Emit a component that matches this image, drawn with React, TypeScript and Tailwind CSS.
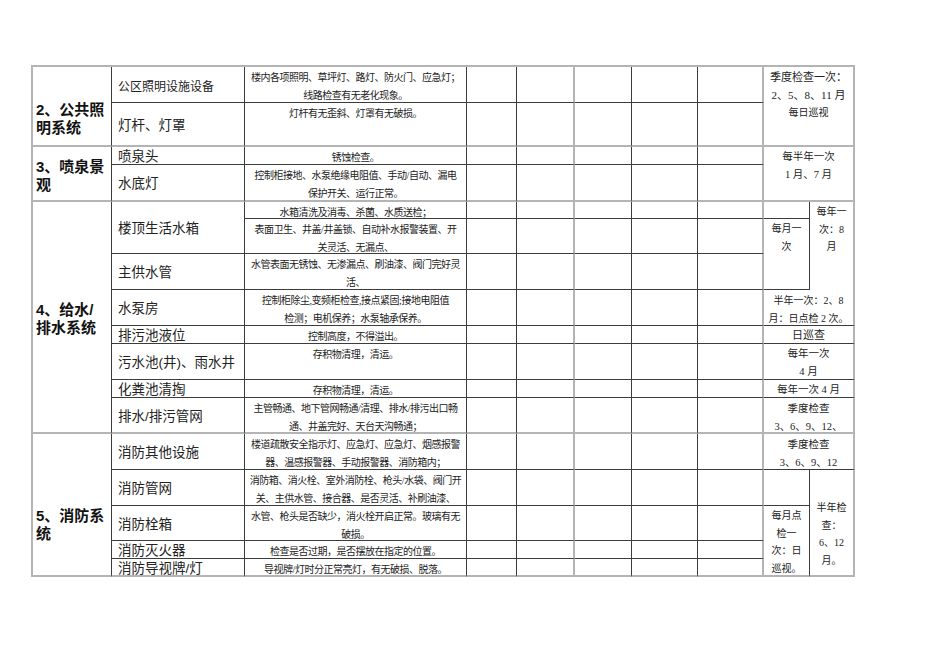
import React from 'react';

const serif = "font-['Liberation_Serif','Noto_Sans_CJK_SC',serif]";
const sans = "font-['Liberation_Sans','Noto_Sans_CJK_SC',sans-serif]";

type CellProps = {
  pos: string;
  r?: boolean;
  b?: boolean;
  className?: string;
  children?: React.ReactNode;
};

// grey = the thicker light rule, otherwise thin dark rule
function Cell({ pos, r, b, className = '', children }: CellProps) {
  const right = r ? 'border-r-2 border-r-[#b4b4b4]' : 'border-r border-r-[#3c3c3c]';
  const bottom = b ? 'border-b-2 border-b-[#b4b4b4]' : 'border-b border-b-[#3c3c3c]';
  return <div className={`${pos} ${right} ${bottom} ${className}`}>{children}</div>;
}

const rowStart = [
  'row-start-1',
  'row-start-2',
  'row-start-3',
  'row-start-4',
  'row-start-5',
  'row-start-6',
  'row-start-7',
  'row-start-8',
  'row-start-9',
  'row-start-10',
  'row-start-11',
  'row-start-12',
  'row-start-13',
  'row-start-14',
  'row-start-15',
  'row-start-16',
  'row-start-17',
];
const midCols = ['col-start-4', 'col-start-5', 'col-start-6', 'col-start-7', 'col-start-8'];
const groupEnd = [2, 4, 12, 17];

const items: { pos: string; text: string; small?: boolean; b?: boolean }[] = [
  { pos: 'row-start-1', text: '公区照明设施设备', small: true },
  { pos: 'row-start-2', text: '灯杆、灯罩', b: true },
  { pos: 'row-start-3', text: '喷泉头' },
  { pos: 'row-start-4', text: '水底灯', b: true },
  { pos: 'row-start-5 row-span-2', text: '楼顶生活水箱' },
  { pos: 'row-start-7', text: '主供水管' },
  { pos: 'row-start-8', text: '水泵房' },
  { pos: 'row-start-9', text: '排污池液位' },
  { pos: 'row-start-10', text: '污水池(井)、雨水井' },
  { pos: 'row-start-11', text: '化粪池清掏' },
  { pos: 'row-start-12', text: '排水/排污管网', b: true },
  { pos: 'row-start-13', text: '消防其他设施' },
  { pos: 'row-start-14', text: '消防管网' },
  { pos: 'row-start-15', text: '消防栓箱' },
  { pos: 'row-start-16', text: '消防灭火器' },
  { pos: 'row-start-17', text: '消防导视牌/灯', b: true },
];

const descs: string[][] = [
  ['楼内各项照明、草坪灯、路灯、防火门、应急灯；', '线路检查有无老化现象。'],
  ['灯杆有无歪斜、灯罩有无破损。'],
  ['锈蚀检查。'],
  ['控制柜接地、水泵绝缘电阻值、手动/自动、漏电', '保护开关、运行正常。'],
  ['水箱清洗及消毒、杀菌、水质送检；'],
  ['表面卫生、井盖/井盖锁、自动补水报警装置、开', '关灵活、无漏点、'],
  ['水管表面无锈蚀、无渗漏点、刷油漆、阀门完好灵', '活、'],
  ['控制柜除尘,变频柜检查,接点紧固;接地电阻值', '检测；电机保养；水泵轴承保养。'],
  ['控制高度，不得溢出。'],
  ['存积物清理，清运。'],
  ['存积物清理，清运。'],
  ['主管畅通、地下管网畅通/清理、排水/排污出口畅', '通、井盖完好、天台天沟畅通；'],
  ['楼道疏散安全指示灯、应急灯、应急灯、烟感报警', '器、温感报警器、手动报警器、消防箱内；'],
  ['消防箱、消火栓、室外消防栓、枪头/水袋、阀门开', '关、主供水管、接合器、是否灵活、补刷油漆、'],
  ['水管、枪头是否缺少，消火栓开启正常。玻璃有无', '破损。'],
  ['检查是否过期，是否摆放在指定的位置。'],
  ['导视牌/灯时分正常亮灯，有无破损、脱落。'],
];

const groupCls = `col-start-1 pl-[3px] text-[15px] font-bold leading-[18px] text-[#111] ${sans}`;
const itemCls = `col-start-2 flex items-center pl-[6px] pt-[4px] text-[#222] whitespace-nowrap ${sans}`;
const descCls = `col-start-3 pt-[2px] text-center text-[10px] leading-[18px] tracking-[-0.5px] whitespace-nowrap text-[#222] ${serif}`;
const freqCls = `text-center leading-[17.5px] whitespace-nowrap text-[#222] ${serif}`;

function Lines({ lines }: { lines: string[] }) {
  return (
    <>
      {lines.map((l, i) => (
        <div key={i}>{l}</div>
      ))}
    </>
  );
}

export default function App() {
  return (
    <div className="min-h-screen bg-white pt-[65px] pl-[31px]">
      <div className="grid w-fit grid-cols-[79px_133px_222px_50px_58px_57px_66px_66px_46px_45px] grid-rows-[36px_44px_18px_37px_17px_35px_36px_36px_18px_36px_18px_36px_36px_36px_35px_18px_18px] border-l-2 border-t-2 border-[#b4b4b4]">
        {/* column 1: system groups */}
        <Cell pos="row-start-1 row-span-2" b className={`${groupCls} pt-[34px]`}>
          <div>2、公共照</div>
          <div>明系统</div>
        </Cell>
        <Cell pos="row-start-3 row-span-2" b className={`${groupCls} pt-[11px]`}>
          <div>3、喷泉景</div>
          <div>观</div>
        </Cell>
        <Cell pos="row-start-5 row-span-8" b className={`${groupCls} pt-[99px]`}>
          <div>4、给水/</div>
          <div>排水系统</div>
        </Cell>
        <Cell pos="row-start-13 row-span-5" b className={`${groupCls} pt-[73px]`}>
          <div>5、消防系</div>
          <div>统</div>
        </Cell>

        {/* column 2: items */}
        {items.map((it) => (
          <Cell
            key={it.text}
            pos={it.pos}
            b={it.b}
            className={`${itemCls} ${it.small ? 'text-[12px]' : 'text-[13.5px]'}`}
          >
            {it.text}
          </Cell>
        ))}

        {/* column 3: check content */}
        {descs.map((d, i) => (
          <Cell key={i} pos={rowStart[i]} b={groupEnd.includes(i + 1)} className={descCls}>
            <Lines lines={d} />
          </Cell>
        ))}

        {/* empty record columns */}
        {rowStart.map((rs, i) =>
          midCols.map((cs, j) => (
            <Cell
              key={rs + cs}
              pos={`${rs} ${cs}`}
              r={j === 1 || j === 4}
              b={groupEnd.includes(i + 1)}
            />
          )),
        )}

        {/* frequency columns */}
        <Cell pos="row-start-1 row-span-2 col-start-9 col-span-2" r b className={`${freqCls} text-[11px] pt-[2px]`}>
          <div>季度检查一次：</div>
          <div>2、5、8、11 月</div>
          <div className="text-[10px]">每日巡视</div>
        </Cell>
        <Cell pos="row-start-3 row-span-2 col-start-9 col-span-2" r b className={`${freqCls} text-[10.5px] pt-px`}>
          <div>每半年一次</div>
          <div>1 月、7 月</div>
        </Cell>
        <Cell pos="row-start-5 col-start-9" />
        <Cell pos="row-start-5 row-span-4 col-start-10" r className={`${freqCls} text-[10px] pt-px`}>
          <div>每年一</div>
          <div>次：8</div>
          <div>月</div>
        </Cell>
        <Cell pos="row-start-6 row-span-2 col-start-9" className={`${freqCls} text-[10px] pt-px`}>
          <div>每月一</div>
          <div>次</div>
        </Cell>
        <Cell pos="row-start-8 col-start-9 col-span-2" r className={`${freqCls} text-[10px] pt-[2px]`}>
          <div>半年一次：2、8</div>
          <div>月：日点检 2 次。</div>
        </Cell>
        <Cell pos="row-start-9 col-start-9 col-span-2" r className={`${freqCls} text-[11px] pt-px`}>
          日巡查
        </Cell>
        <Cell pos="row-start-10 col-start-9 col-span-2" r className={`${freqCls} text-[10.5px] pt-px`}>
          <div>每年一次</div>
          <div>4 月</div>
        </Cell>
        <Cell pos="row-start-11 col-start-9 col-span-2" r className={`${freqCls} text-[10.5px] pt-px`}>
          每年一次 4 月
        </Cell>
        <Cell pos="row-start-12 col-start-9 col-span-2" r b className={`${freqCls} text-[10.5px] pt-[2px]`}>
          <div>季度检查</div>
          <div>3、6、9、12、</div>
        </Cell>
        <Cell pos="row-start-13 col-start-9 col-span-2" r className={`${freqCls} text-[10.5px] pt-[2px]`}>
          <div>季度检查</div>
          <div>3、6、9、12</div>
        </Cell>
        <Cell pos="row-start-14 col-start-9" />
        <Cell pos="row-start-14 row-span-4 col-start-10" r b className={`${freqCls} text-[10px] pt-[29px]`}>
          <div>半年检</div>
          <div>查：</div>
          <div>6、12</div>
          <div>月。</div>
        </Cell>
        <Cell pos="row-start-15 row-span-3 col-start-9" b className={`${freqCls} text-[10px] pt-px`}>
          <div>每月点</div>
          <div>检一</div>
          <div>次：日</div>
          <div>巡视。</div>
        </Cell>
      </div>
    </div>
  );
}
